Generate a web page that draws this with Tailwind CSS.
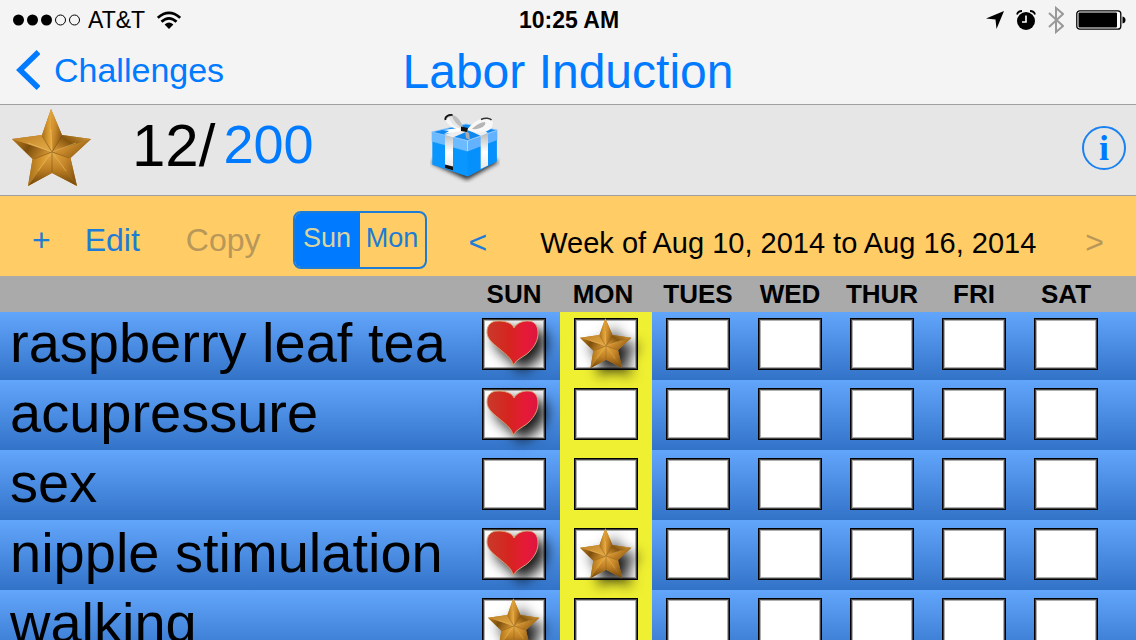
<!DOCTYPE html>
<html lang="en">
<head>
    <meta charset="UTF-8">
    <meta name="viewport" content="width=device-width, initial-scale=1.0">
    <title>Labor Induction</title>
    <script src="https://cdn.jsdelivr.net/npm/@tailwindcss/browser@4"></script>
</head>
<body class="font-['Liberation_Sans',Arial,sans-serif] text-black">
    <!-- Shared artwork -->
    <svg width="0" height="0" class="absolute" aria-hidden="true">
        <defs>
            <linearGradient id="gold-h" x1="0" x2="1" y1="0" y2="0">
                <stop offset="0" stop-color="#a8701c" />
                <stop offset="0.6" stop-color="#d8982f" />
                <stop offset="1" stop-color="#e8ae48" />
            </linearGradient>
            <linearGradient id="gold-v" x1="0" x2="1" y1="0" y2="0.6">
                <stop offset="0" stop-color="#e6a840" />
                <stop offset="0.5" stop-color="#c8882a" />
                <stop offset="1" stop-color="#8a5812" />
            </linearGradient>
            <linearGradient id="gold-right" x1="0" x2="1" y1="0.6" y2="0">
                <stop offset="0" stop-color="#c88a2c" />
                <stop offset="0.4" stop-color="#86560f" />
                <stop offset="1" stop-color="#dfa342" />
            </linearGradient>
            <linearGradient id="gold-left" x1="1" x2="0" y1="0.3" y2="0">
                <stop offset="0" stop-color="#cf9030" />
                <stop offset="0.5" stop-color="#7c4e0c" />
                <stop offset="1" stop-color="#b87c22" />
            </linearGradient>
            <linearGradient id="gold-down" x1="0" x2="0" y1="0" y2="1">
                <stop offset="0" stop-color="#e6aa44" />
                <stop offset="0.5" stop-color="#bf8024" />
                <stop offset="1" stop-color="#6e440a" />
            </linearGradient>
            <linearGradient id="gold-light" x1="0" x2="1" y1="0" y2="1">
                <stop offset="0" stop-color="#bd8026" />
                <stop offset="1" stop-color="#e6ac48" />
            </linearGradient>
            <linearGradient id="heart-red" x1="0" x2="1" y1="0" y2="0">
                <stop offset="0" stop-color="#c83a2a" />
                <stop offset="0.45" stop-color="#d6241f" />
                <stop offset="0.75" stop-color="#e61a38" />
                <stop offset="1" stop-color="#dd1440" />
            </linearGradient>
            <linearGradient id="ribbon" x1="0" x2="0" y1="0" y2="1">
                <stop offset="0" stop-color="#bcbcbc" />
                <stop offset="0.5" stop-color="#ffffff" />
                <stop offset="1" stop-color="#e6e6e6" />
            </linearGradient>
        </defs>
        <symbol id="star" viewBox="0 0 80 78">
            <path fill="#b07822" d="M39 0 50 26 79 30 58.500 49 65 77 40 64 16 77 20.500 50 0 30 30 26Z" />
            <path fill="url(#gold-h)" d="M39 0 30 26 40 43Z" />
            <path fill="url(#gold-v)" d="M39 0 50 26 40 43Z" />
            <path fill="url(#gold-right)" d="M79 30 50 26 40 43Z" />
            <path fill="url(#gold-v)" d="M79 30 58.500 49 40 43Z" />
            <path fill="url(#gold-v)" d="M65 77 58.500 49 40 43Z" />
            <path fill="url(#gold-down)" d="M65 77 40 64 40 43Z" />
            <path fill="url(#gold-down)" d="M16 77 40 64 40 43Z" />
            <path fill="url(#gold-h)" d="M16 77 20.500 50 40 43Z" />
            <path fill="url(#gold-left)" d="M0 30 20.500 50 40 43Z" />
            <path fill="url(#gold-light)" d="M0 30 30 26 40 43Z" />
            <path fill="none" stroke="#f4cc78" stroke-opacity=".7" stroke-width=".7" d="M40 43 39 20M40 43 64 34M40 43 54 62M40 43 26 62M40 43 16 34" />
            <path fill="none" stroke="#5f3b08" stroke-opacity=".5" stroke-width=".8" d="M40 43 50 27M40 43 57 49M40 43V63M40 43 22 50M40 43 30 27" />
        </symbol>
        <symbol id="heart" viewBox="0 0 53 46">
            <path fill="url(#heart-red)" stroke="#d6a070" stroke-width="1" d="M27 45C26 38 18 33 10 26C4 21 1 17 1 12C1 5 5 1 12 1C20 1 26 3 28 8C31 3 36 1 42 1C49 1 52 6 52 13C52 20 49 26 43 32C38 37 32 38 27 45Z" />
        </symbol>
    </svg>

    <div class="flex h-screen flex-col overflow-hidden bg-[#4285d8]">
        <!-- Status bar -->
        <div class="grid h-10 shrink-0 grid-cols-3 items-center bg-[#f4f4f4] pr-2.5 pl-3 text-[23px] leading-none">
            <div class="flex items-center">
                <svg class="mr-2 h-3 w-[68px]" viewBox="0 0 68 12">
                    <circle cx="6.500" cy="6" r="5.500" />
                    <circle cx="20.500" cy="6" r="5.500" />
                    <circle cx="34.500" cy="6" r="5.500" />
                    <circle cx="48.500" cy="6" r="5" fill="none" stroke="black" />
                    <circle cx="62.500" cy="6" r="5" fill="none" stroke="black" />
                </svg>
                <span>AT&amp;T</span>
                <svg class="ml-3 h-[18px] w-6" viewBox="0 0 24 18" fill="none" stroke="black" stroke-width="2.800">
                    <path d="M.8 6.800Q12-3 23.200 6.800" />
                    <path d="M4.500 10.800Q12 4 19.500 10.800" />
                    <path fill="black" stroke="none" d="M7.600 13.400Q12 9.600 16.400 13.400L12 18Z" />
                </svg>
            </div>
            <span class="text-center font-bold">10:25 AM</span>
            <div class="flex items-center justify-end">
                <svg class="mr-3 h-[18px] w-[18px]" viewBox="0 0 18 18"><path d="M18 0 10.500 18 9.500 8.500 0 7.500Z" /></svg>
                <svg class="mr-3 h-5 w-5" viewBox="0 0 20 20">
                    <circle cx="10" cy="11" r="9" />
                    <path d="M1 4.500Q2 1 6 1M14 1Q18 1 19 4.500" fill="none" stroke="black" stroke-width="1.800" />
                    <path d="M10 5.500V12H6" fill="none" stroke="white" stroke-width="1.600" />
                </svg>
                <svg class="mr-3 h-7 w-4" viewBox="0 0 16 28" fill="none" stroke="#999" stroke-width="2"><path d="M1 7 15 20 8 26V2L15 8 1 21" /></svg>
                <svg class="h-5 w-[50px]" viewBox="0 0 50 20">
                    <rect x=".8" y=".8" width="44" height="18.400" rx="3" fill="white" stroke="black" stroke-width="1.300" />
                    <rect x="2.500" y="2.500" width="38.500" height="15" rx="1" />
                    <path d="M46.500 6.500Q49.500 7 49.500 10T46.500 13.500Z" />
                </svg>
            </div>
        </div>

        <!-- Navigation bar -->
        <header class="grid h-[65px] shrink-0 grid-cols-[1fr_auto_1fr] items-center border-b border-[#a0a0a0] bg-[#f4f4f4] text-[#007aff]">
            <a href="#" class="flex items-center pb-1 pl-4 text-[34px] leading-none">
                <svg class="mr-3.5 h-10 w-6" viewBox="0 0 24 40" fill="none" stroke="currentColor" stroke-width="5.500"><path d="M22.500 2 4 20 22.500 38" /></svg>
                Challenges
            </a>
            <h1 class="text-[48px] leading-none">Labor Induction</h1>
        </header>

        <!-- Points and reward -->
        <section class="flex h-[91px] shrink-0 items-center border-b border-[#a0a0a0] bg-[#e6e6e6] pr-2.5 pb-1 pl-3 text-[#007aff]">
            <svg class="h-[78px] w-20"><use href="#star" /></svg>
            <p class="ml-10 flex items-center gap-2 pb-1 text-[54px] leading-none"><span class="text-[60px] text-black">12/</span><span class="pb-1">200</span></p>
            <button class="ml-29" aria-label="Reward">
                <svg class="h-[70px] w-[70px]" viewBox="0 0 70 70">
                    <path class="blur-[2px]" fill="#333" d="M1 50 37 67 69 49 60 44H8Z" />
                    <path fill="#0a96ff" d="M2.300 22V51.700L37.700 63.500 66.700 48.300V20L37.300 30Z" />
                    <path fill="#0590fb" d="M37.700 30V63.500L66.700 48.300V20Z" />
                    <path fill="#0f88f0" stroke="#8cc8ff" stroke-width=".8" d="M1.700 19 36 11 67.300 17 37.500 27.500Z" />
                    <path fill="#6cbaff" d="M1.700 19 37.500 28V38.500L1.700 28.500Z" />
                    <path fill="#62b2ff" d="M37.500 28 67.300 17.500V27L37.500 38.500Z" />
                    <path stroke="#c9e6ff" stroke-width=".8" d="M37.500 28V38" />
                    <path fill="#eeeeee" d="M14 22 33 15 38 18 23 24.500ZM36 16 48 13 58 20 51 23Z" />
                    <path fill="url(#ribbon)" d="M15 22 23 24.500V57.500L15 55ZM50.700 23 58 20.500V52.500L50.700 56Z" />
                    <path fill="#111" d="M15 51.500 23 53.500V57.500L15 55Z" />
                    <path fill="#bdbdbd" d="M34 17C27 18 17 11 15.500 6C15 2 20 1 24 2.500C29 5 32 10 34 17Z" />
                    <path fill="#e6e6e6" d="M18 5C20 11 27 16 34 17C31 14 24 10 22 3Z" />
                    <path fill="#f6f6f6" d="M15.500 7C17 12 25 17 34 17C26 15 20 10 19 4Z" />
                    <path fill="none" stroke="#111" stroke-width="1.800" d="M15.500 7C14.500 4 18 1.500 22.500 2" />
                    <path fill="#f8f8f8" d="M37 17C41 11 49 5 56 5C62 5 64 9 62 14C59 20 46 21 37 17Z" />
                    <path fill="#b5b5b5" d="M42 16C46 12 51 9 55 9C57 13 49 17 42 16Z" />
                    <path fill="none" stroke="#333" stroke-width="1.500" d="M51 6.500C55 4.500 60 5 61.500 7" />
                    <path fill="#fff" d="M31 18 14 21 19 18 13 17 29 15Z" />
                    <path fill="#aaa" d="M35 18 39 20 40 27 36 25Z" />
                    <path fill="#111" d="M31 13.500 38 15 37 19 31 18Z" />
                </svg>
            </button>
            <button class="ml-auto flex size-11 items-center justify-center rounded-full border-2 border-[#1a82f0] font-['Liberation_Serif',serif] text-[36px] leading-none font-bold" aria-label="Info">i</button>
        </section>

        <!-- Week toolbar -->
        <div class="flex h-20 shrink-0 items-center bg-[#ffcc66] pt-2 pr-8 pl-8 text-[32px] leading-none text-[#1c7cd6]">
            <button aria-label="Add">+</button>
            <button class="ml-8.5">Edit</button>
            <button class="ml-11.5 text-[#b8975a]" disabled>Copy</button>
            <div class="ml-8 grid h-[58px] w-[134px] grid-cols-2 overflow-hidden rounded-lg border-2 border-[#1c7cd6] text-[27px]">
                <button class="bg-[#007aff] pb-1 text-[#d9d3a0]">Sun</button>
                <button class="pb-1">Mon</button>
            </div>
            <div class="ml-10.5 flex flex-1 items-center justify-between pt-1">
                <button aria-label="Previous week">&lt;</button>
                <span class="pt-0.5 pl-1 text-[29px] text-black">Week of Aug 10, 2014 to Aug 16, 2014</span>
                <button class="text-[#b8975a]" aria-label="Next week" disabled>&gt;</button>
            </div>
        </div>

        <!-- Chart -->
        <table class="w-full table-fixed border-collapse">
            <thead>
                <tr class="h-9 bg-[#aaaaaa] text-[26px] leading-none">
                    <td></td>
                    <th scope="col" class="w-[92px] p-0">SUN</th>
                    <th scope="col" class="w-[92px] p-0 pr-1.5">MON</th>
                    <th scope="col" class="w-[92px] p-0">TUES</th>
                    <th scope="col" class="w-[92px] p-0">WED</th>
                    <th scope="col" class="w-[92px] p-0">THUR</th>
                    <th scope="col" class="w-[92px] p-0">FRI</th>
                    <th scope="col" class="w-[92px] p-0">SAT</th>
                    <td class="w-6"></td>
                </tr>
            </thead>
            <tbody id="chart"></tbody>
        </table>
    </div>

    <script>
        const days = ['Sunday', 'Monday', 'Tuesday', 'Wednesday', 'Thursday', 'Friday', 'Saturday'];
        const today = 1;
        const chores = [
            { name: 'raspberry leaf tea', marks: { 0: 'heart', 1: 'star' } },
            { name: 'acupressure', marks: { 0: 'heart' } },
            { name: 'sex', marks: {} },
            { name: 'nipple stimulation', marks: { 0: 'heart', 1: 'star' } },
            { name: 'walking', marks: { 0: 'star' } },
        ];

        const stickers = {
            heart: '<svg class="pointer-events-none absolute top-0.5 left-1 h-[46px] w-[53px] overflow-visible drop-shadow-[8px_8px_7px_rgba(0,0,0,0.9)]"><use href="#heart" /></svg>',
            star: '<svg class="pointer-events-none absolute top-0 left-1.5 h-[51px] w-[52px] overflow-visible drop-shadow-[8px_8px_7px_rgba(0,0,0,0.9)]"><use href="#star" /></svg>',
        };

        function cell(chore, day) {
            const mark = chore.marks[day];
            return `<td class="p-0 align-top ${day === today ? 'bg-[#f0f032]' : ''}">
                <label class="relative mx-auto block h-[52px] w-16">
                    <input type="checkbox" aria-label="${chore.name}, ${days[day]}" ${mark ? 'checked' : ''} class="block h-full w-full appearance-none border border-black bg-white shadow-[inset_0_0_0_1px_#444,inset_0_0_0_2px_#b0b0b0]">
                    ${mark ? stickers[mark] : ''}
                </label>
            </td>`;
        }

        document.getElementById('chart').innerHTML = chores.map((chore) => `
            <tr class="h-[70px] bg-linear-to-b from-[#62a6fc] to-[#3273c8] *:pt-2 first:h-[68px] first:*:pt-1.5">
                <th scope="row" class="pl-2.5 text-left align-top text-[56px] leading-[50px] font-normal whitespace-nowrap">${chore.name}</th>
                ${days.map((_, day) => cell(chore, day)).join('')}
                <td></td>
            </tr>`).join('');
    </script>
</body>
</html>
